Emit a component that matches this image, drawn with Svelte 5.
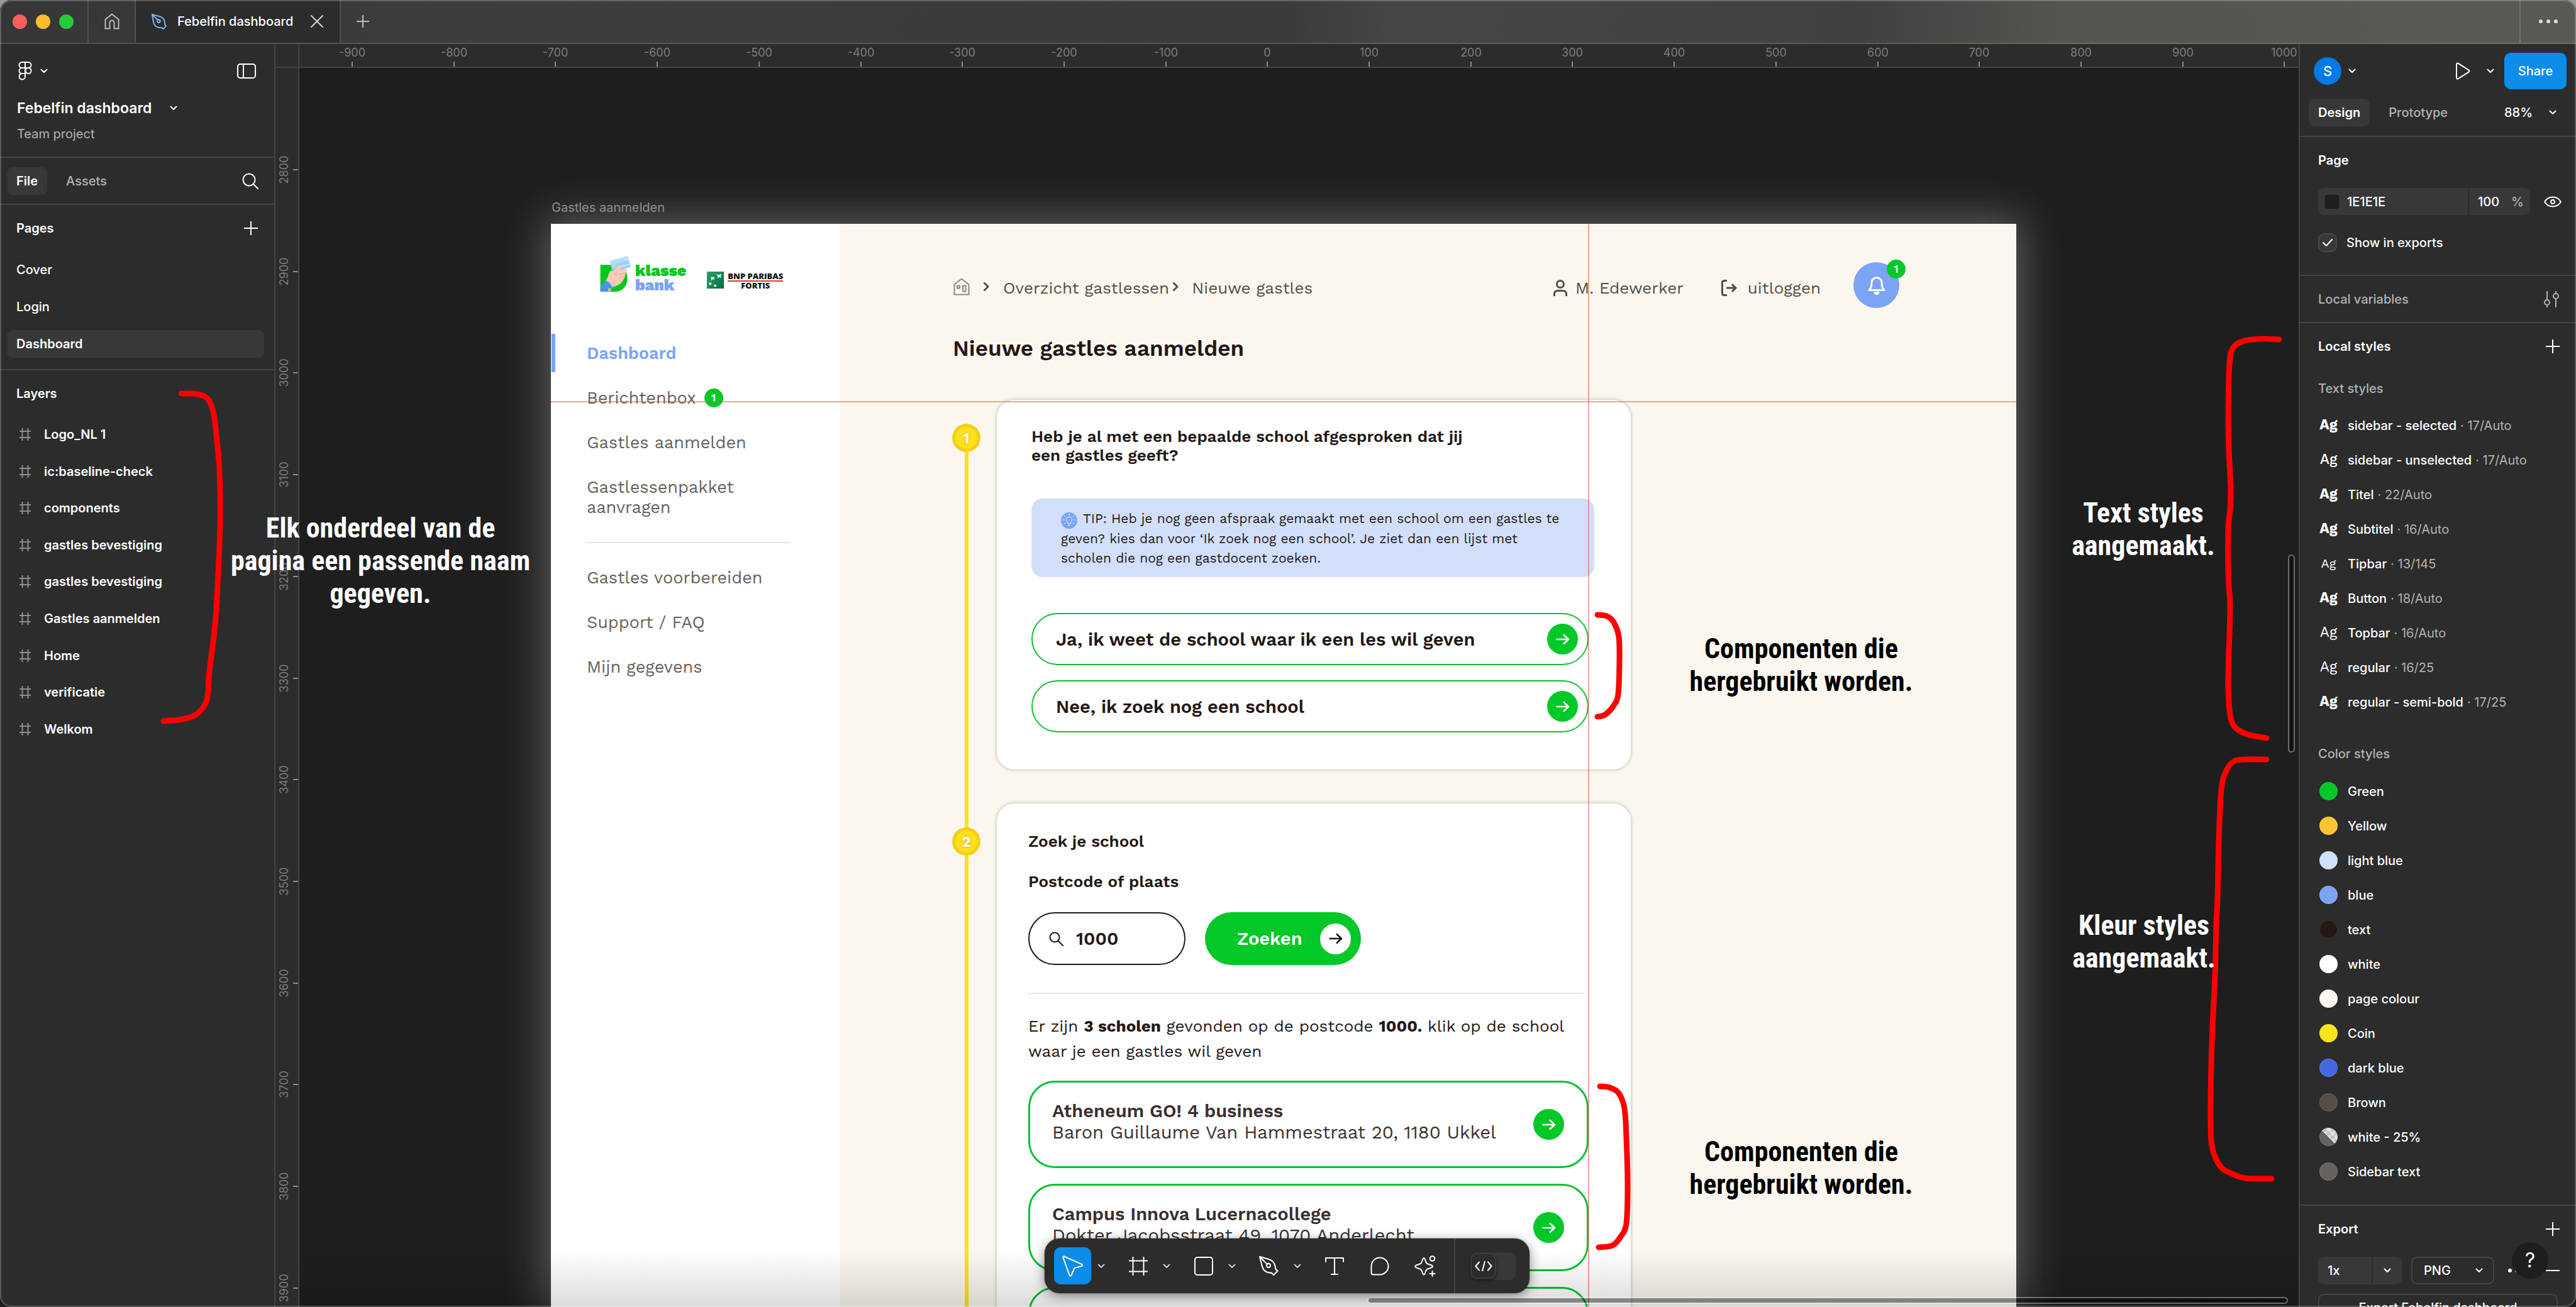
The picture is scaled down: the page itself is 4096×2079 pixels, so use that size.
<script>
  const pages = ['Cover', 'Login', 'Dashboard'];
  const layers = [
    'Logo_NL 1', 'ic:baseline-check', 'components', 'gastles bevestiging', 'gastles bevestiging',
    'Gastles aanmelden', 'Home', 'verificatie', 'Welkom'
  ];
  const textStyles = [
    { name: 'sidebar - selected', spec: '17/Auto', weight: 'bold' },
    { name: 'sidebar - unselected', spec: '17/Auto', weight: 'medium' },
    { name: 'Titel', spec: '22/Auto', weight: 'bold' },
    { name: 'Subtitel', spec: '16/Auto', weight: 'bold' },
    { name: 'Tipbar', spec: '13/145', weight: 'small' },
    { name: 'Button', spec: '18/Auto', weight: 'bold' },
    { name: 'Topbar', spec: '16/Auto', weight: 'regular' },
    { name: 'regular', spec: '16/25', weight: 'regular' },
    { name: 'regular - semi-bold', spec: '17/25', weight: 'bold' }
  ];
  const colorStyles = [
    ['Green', '#02c828'], ['Yellow', '#fbc531'], ['light blue', '#d1dffa'], ['blue', '#7ba4f5'],
    ['text', '#231815'], ['white', '#ffffff'], ['page colour', '#faf7ef'], ['Coin', '#ffe31b'],
    ['dark blue', '#4468e2'], ['Brown', '#544e48'], ['white - 25%', null], ['Sidebar text', '#67625d']
  ];
  const schools = [
    { name: 'Atheneum GO! 4 business', address: 'Baron Guillaume Van Hammestraat 20, 1180 Ukkel' },
    { name: 'Campus Innova Lucernacollege', address: 'Dokter Jacobsstraat 49, 1070 Anderlecht' },
    { name: '', address: '' }
  ];

  const PITCH = 161.7;
  const xTicks = Array.from({ length: 20 }, (_, i) => ({ label: (i - 9) * 100, at: Math.round(84 + i * PITCH) }));
  const yTicks = Array.from({ length: 12 }, (_, i) => ({ label: 2800 + i * 100, at: Math.round(162 + i * PITCH) }));

  const notes = [
    { x: 605, y: 814, tone: 'light', lines: ['Elk onderdeel van de', 'pagina een passende naam', 'gegeven.'] },
    { x: 3408, y: 790, tone: 'light', lines: ['Text styles', 'aangemaakt.'] },
    { x: 3409, y: 1446, tone: 'light', lines: ['Kleur styles', 'aangemaakt.'] },
    { x: 2864, y: 1006, tone: 'dark', lines: ['Componenten die', 'hergebruikt worden.'] },
    { x: 2864, y: 1806, tone: 'dark', lines: ['Componenten die', 'hergebruikt worden.'] }
  ];

  const strokes = [
    [[288, 626], [314, 627], [331, 635], [340, 659], [344, 692], [349, 749], [350, 831], [347, 912], [342, 994], [333, 1068], [329, 1113], [314, 1135], [291, 1144], [260, 1147]],
    [[3624, 540], [3596, 539], [3569, 542], [3551, 553], [3545, 580], [3543, 659], [3544, 713], [3547, 778], [3546, 811], [3543, 840], [3543, 912], [3546, 966], [3544, 1039], [3543, 1093], [3546, 1136], [3553, 1156], [3573, 1168], [3604, 1174]],
    [[3604, 1208], [3570, 1208], [3552, 1211], [3540, 1226], [3532, 1256], [3528, 1340], [3526, 1428], [3524, 1469], [3522, 1552], [3517, 1660], [3515, 1781], [3518, 1827], [3531, 1856], [3547, 1866], [3570, 1874], [3612, 1875]],
    [[2540, 978], [2555, 980], [2566, 990], [2574, 1013], [2575, 1052], [2573, 1104], [2566, 1122], [2552, 1137], [2540, 1140]],
    [[2544, 1728], [2560, 1730], [2574, 1739], [2583, 1763], [2586, 1809], [2588, 1885], [2586, 1946], [2577, 1967], [2564, 1981], [2542, 1984]]
  ];

  function smooth(p) {
    let d = `M${p[0]}`;
    for (let i = 0; i < p.length - 1; i++) {
      const a = p[i - 1] ?? p[i], b = p[i], c = p[i + 1], e = p[i + 2] ?? c;
      d += `C${b[0] + (c[0] - a[0]) / 6} ${b[1] + (c[1] - a[1]) / 6} ${c[0] - (e[0] - b[0]) / 6} ${c[1] - (e[1] - b[1]) / 6} ${c[0]} ${c[1]}`;
    }
    return d;
  }

  let postcode = $state('1000');
  let showInExports = $state(true);
</script>

{#snippet chevron()}
  <svg class="chev" width="12" height="8" viewBox="0 0 12 8" aria-hidden="true"><path d="M1.5 1.5 6 6l4.500-4.500" /></svg>
{/snippet}
{#snippet plus()}
  <svg width="22" height="22" viewBox="0 0 22 22" aria-hidden="true"><path d="M11 0v22M0 11h22" /></svg>
{/snippet}
{#snippet arrow()}
  <span class="arrow"><svg width="22" height="18" viewBox="0 0 24 20" aria-hidden="true"><path d="M1.500 10h20M14 2.500l8 7.500-8 7.500" /></svg></span>
{/snippet}
{#snippet crumb()}
  <svg class="crumb" width="9" height="14" viewBox="0 0 9 14" aria-hidden="true"><path d="M1.500 1.500 7 7l-5.500 5.500" /></svg>
{/snippet}

<div class="window">
  <header class="titlebar">
    <div class="lights"><i class="red"></i><i class="amber"></i><i class="green"></i></div>
    <button class="home" aria-label="Home">
      <svg width="24" height="26" viewBox="0 0 24 26"><path d="M1.500 10 12 1.500 22.500 10v14.500h-7V15a3.500 3.500 0 0 0-7 0v9.500h-7z" /></svg>
    </button>
    <div class="tab">
      <svg class="pen" width="26" height="26" viewBox="0 0 28 28"><path d="M2 2l13 3.500c5 1.500 8 5 8.500 10l.5 4.500 2 2-5 5-2-2-5-.5c-5-.5-8.500-4-9.500-9zM2 2l9.500 9.500" /><circle cx="13.500" cy="13.500" r="2.500" /></svg>
      <span>Febelfin dashboard</span>
      <button aria-label="Close tab"><svg width="20" height="20" viewBox="0 0 20 20"><path d="M1 1l18 18M19 1 1 19" /></svg></button>
    </div>
    <button class="newtab" aria-label="New tab"><svg width="20" height="20" viewBox="0 0 20 20"><path d="M10 0v20M0 10h20" /></svg></button>
    <button class="more" aria-label="More"><i></i><i></i><i></i></button>
  </header>

  <div class="work">
    <aside class="left">
      <section class="filehead">
        <div class="bar">
          <button class="logo" aria-label="Main menu">
            <svg width="22" height="30" viewBox="0 0 22 30"><path d="M6 1h5v9H6a4.500 4.500 0 0 1 0-9zM11 1h5a4.500 4.500 0 0 1 0 9h-5zM6 10h5v9H6a4.500 4.500 0 0 1 0-9zM6 19h5v5a4.700 4.700 0 1 1-5-5z" /><circle cx="16" cy="14.500" r="4.500" /></svg>
            {@render chevron()}
          </button>
          <button aria-label="Toggle panels"><svg width="30" height="24" viewBox="0 0 30 24"><rect x="1" y="1" width="28" height="22" rx="4" /><path d="M10 1v22" /></svg></button>
        </div>
        <button class="filename">Febelfin dashboard {@render chevron()}</button>
        <p class="project">Team project</p>
      </section>
      <section class="tabs">
        <button class="on">File</button>
        <button>Assets</button>
        <button class="find" aria-label="Search"><svg width="26" height="26" viewBox="0 0 26 26"><circle cx="11" cy="11" r="9.500" /><path d="M18 18l7 7" /></svg></button>
      </section>
      <section class="pages">
        <h2>Pages <button aria-label="Add page">{@render plus()}</button></h2>
        <ul>
          {#each pages as page}
            <li><button class:on={page === 'Dashboard'}>{page}</button></li>
          {/each}
        </ul>
      </section>
      <section class="layers">
        <h2>Layers</h2>
        <ul>
          {#each layers as layer}
            <li>
              <svg width="18" height="20" viewBox="0 0 18 20" aria-hidden="true"><path d="M4.500 0v20M13.500 0v20M0 5h18M0 15h18" /></svg>
              {layer}
            </li>
          {/each}
        </ul>
      </section>
    </aside>

    <main class="stage">
      <div class="corner"></div>
      <svg class="ruler top" aria-hidden="true">
        {#each xTicks as t}
          <text x={t.at} y="20">{t.label}</text><rect x={t.at - 1} y="28" width="2" height="8" />
        {/each}
      </svg>
      <svg class="ruler side" aria-hidden="true">
        {#each yTicks as t}
          <text transform="translate(20 {t.at}) rotate(-90)">{t.label}</text><rect x="28" y={t.at - 1} width="8" height="2" />
        {/each}
      </svg>

      <div class="canvas">
        <p class="frame-name">Gastles aanmelden</p>
        <article class="frame">
          <nav class="menu">
            <div class="logos">
              <div class="klasse">
                <svg width="50" height="58" viewBox="0 0 164 190" aria-hidden="true">
                  <path fill="#02c81c" d="M2 47h78c38 0 63 31 63 70s-25 70-68 70H2z" />
                  <g transform="rotate(-16 105 43)">
                    <rect x="56" y="13" width="98" height="61" rx="9" fill="#9ed1f8" />
                    <rect x="56" y="13" width="98" height="22" rx="9" fill="#b4defb" />
                    <rect x="64" y="38" width="15" height="13" rx="3" fill="#f3d36b" />
                    <path d="M100 56h46M134 28h12" stroke="#e9f6ff" stroke-width="4" />
                  </g>
                  <path fill="#f7cbb5" d="M32 128c9-14 10-28 18-44 6-9 16-6 22-3l28-31c7-6 18 0 13 10L99 74l32-5c11 0 13 12 4 17-3 20-9 39-24 54-13 13-27 17-43 21z" />
                  <path fill="none" stroke="#e9a98f" stroke-width="3" d="M92 80l-12 12c-3 5 2 9 8 7M132 88l-32 12M126 108l-24 6" />
                  <path fill="#9fd0f7" d="M24 130c8-5 18-3 28 6 10 10 16 20 15 31l-9 8z" />
                  <path fill="#4b93e6" d="M2 162l26-33c20 8 33 22 37 42l-12 16H2z" />
                  <circle cx="50" cy="177" r="8" fill="#f2d33c" />
                </svg>
                <p><b>klasse</b><b class="bank">bank</b></p>
              </div>
              <div class="bnp">
                <svg width="27" height="27" viewBox="0 0 87 87" aria-hidden="true">
                  <defs><linearGradient id="bnp" x1="0" y1="0" x2="1" y2="1"><stop offset="0" stop-color="#2fa36b" /><stop offset="1" stop-color="#00703f" /></linearGradient></defs>
                  <rect width="87" height="87" fill="url(#bnp)" />
                  <path fill="#fff" d="M50 14l12 3 13-5-5 11 5 10-10-5-12 7 3-11zM22 26l8 4 9-4-3 8 4 8-8-3-12 8 4-10-6-7 8 1zM12 54l5 3 5-3-1 6 5 5-7 1-3 7-2-7-6-2 5-4zM38 66l5 3 7-3-3 6 4 4-6 0-8 4 2-7-5-3z" />
                </svg>
                <p><b>BNP PARIBAS</b><b class="fortis">FORTIS</b></p>
              </div>
            </div>
            <ul>
              <li class="active"><a href="#dashboard">Dashboard</a></li>
              <li><a href="#berichten">Berichtenbox</a> <span class="count">1</span></li>
              <li><a href="#aanmelden">Gastles aanmelden</a></li>
              <li><a href="#pakket">Gastlessenpakket aanvragen</a></li>
              <li class="rule"></li>
              <li><a href="#voorbereiden">Gastles voorbereiden</a></li>
              <li><a href="#support">Support / FAQ</a></li>
              <li><a href="#gegevens">Mijn gegevens</a></li>
            </ul>
          </nav>

          <div class="content">
            <div class="topbar">
              <div class="crumbs">
                <svg class="house" width="26" height="28" viewBox="0 0 26 28" aria-hidden="true"><path d="M1.500 10.500 13 1.500l11.500 9v16h-23zM6 12.500h4v4H6zM15 12.500h4.500v9H15z" /></svg>
                {@render crumb()}
                <a href="#overzicht">Overzicht gastlessen</a>
                {@render crumb()}
                <a href="#nieuw">Nieuwe gastles</a>
              </div>
              <div class="account">
                <svg width="22" height="26" viewBox="0 0 22 26" aria-hidden="true"><circle cx="11" cy="7" r="5.500" /><path d="M1.500 26v-3.500c0-3 2-5 5-5h9c3 0 5 2 5 5V26" /></svg>
                <a href="#profiel">M. Edewerker</a>
                <svg class="out" width="25" height="26" viewBox="0 0 25 26" aria-hidden="true"><path d="M9 1.500H4.500c-2 0-3 1-3 3v17c0 2 1 3 3 3H9M8 13h15M17 7l6 6-6 6" /></svg>
                <a href="#uitloggen">uitloggen</a>
              </div>
              <button class="bell" aria-label="Meldingen">
                <svg width="28" height="31" viewBox="0 0 28 31"><path d="M2 23.500c3-3 4-7 4-12a8 8 0 0 1 16 0c0 5 1 9 4 12z" /><path d="M11 27.500a3.200 3.200 0 0 0 6 0z" fill="#fff" /></svg>
                <span class="count">1</span>
              </button>
            </div>
            <h1>Nieuwe gastles aanmelden</h1>

            <div class="steps">
              <div class="step">
                <span class="coin">1</span>
                <section class="card first">
                  <h3>Heb je al met een bepaalde school afgesproken dat jij<br />een gastles geeft?</h3>
                  <p class="tip"><svg width="26" height="26" viewBox="0 0 26 26" aria-hidden="true"><circle cx="13" cy="13" r="13" fill="#7ba4f5" stroke="none" /><path d="M11 17.500c0-2-2.500-3-2.500-6a4.500 4.500 0 0 1 9 0c0 3-2.500 4-2.500 6zM11.500 20.500h3M13 2.500v2M3 12h2M21 12h2M5.500 5.500 7 7M20.500 5.500 19 7M5.500 18.500 7 17M20.500 18.500 19 17" /></svg>TIP: Heb je nog geen afspraak gemaakt met een school om een gastles te<br />geven? kies dan voor ‘Ik zoek nog een school’. Je ziet dan een lijst met<br />scholen die nog een gastdocent zoeken.</p>
                  <button class="choice">Ja, ik weet de school waar ik een les wil geven {@render arrow()}</button>
                  <button class="choice">Nee, ik zoek nog een school {@render arrow()}</button>
                </section>
              </div>
              <div class="step">
                <span class="coin">2</span>
                <section class="card second">
                  <h3>Zoek je school</h3>
                  <label class="h" for="postcode">Postcode of plaats</label>
                  <div class="search">
                    <div class="field">
                      <svg width="23" height="23" viewBox="0 0 23 23" aria-hidden="true"><circle cx="9" cy="9" r="7.500" /><path d="M14.500 14.500l7.500 7.500" /></svg>
                      <input id="postcode" bind:value={postcode} />
                    </div>
                    <button class="go">Zoeken {@render arrow()}</button>
                  </div>
                  <hr />
                  <p class="found">Er zijn <b>3 scholen</b> gevonden op de postcode <b>1000.</b> klik op de school<br />waar je een gastles wil geven</p>
                  {#each schools as s}
                    <button class="school" aria-label={s.name || 'School'}><span><b>{s.name}</b>{s.address}</span>{@render arrow()}</button>
                  {/each}
                </section>
              </div>
            </div>
          </div>
          <i class="guide-h"></i>
          <i class="guide-v"></i>
        </article>

        <div class="fade"></div>
        <i class="scroll-h"></i>
        <i class="scroll-v"></i>

        <div class="toolbar">
          <button class="tool on" aria-label="Move"><svg width="34" height="36" viewBox="0 0 34 36"><path d="M3 2.500 31 15c1.500.8 1.300 2.500-.3 3L19.500 21l-5 11.500c-.8 1.600-2.600 1.400-3-.3L1.500 4.500C1 3 1.800 2 3 2.500z" /></svg></button>
          <button class="drop" aria-label="Move tools">{@render chevron()}</button>
          <button class="tool" aria-label="Frame"><svg width="30" height="30" viewBox="0 0 30 30"><path d="M6.500 0v30M23.500 0v30M0 6.500h30M0 23.500h30" /></svg></button>
          <button class="drop" aria-label="Region tools">{@render chevron()}</button>
          <button class="tool" aria-label="Rectangle"><svg width="30" height="30" viewBox="0 0 30 30"><rect x="1" y="1" width="28" height="28" rx="4" /></svg></button>
          <button class="drop" aria-label="Shape tools">{@render chevron()}</button>
          <button class="tool" aria-label="Pen"><svg width="31" height="31" viewBox="0 0 30 30"><path d="M1 1l13 3.500c6 1.500 10 6 11 12l.5 3.500 3 3-6 6-3-3-4-.5C9 25 6 21 4.500 15zM1 1l11.500 11.500" /><circle cx="14.500" cy="14.500" r="3" /></svg></button>
          <button class="drop" aria-label="Drawing tools">{@render chevron()}</button>
          <button class="tool" aria-label="Text"><svg width="30" height="28" viewBox="0 0 30 28"><path d="M1 7V1h28v6M15 1v26M10 27h10" /></svg></button>
          <button class="tool" aria-label="Comment"><svg width="30" height="30" viewBox="0 0 30 30"><path d="M4.500 28.500c-2 0-3-1-3-3V15A13.500 13.500 0 1 1 15 28.500z" /></svg></button>
          <button class="tool" aria-label="Actions"><svg width="34" height="34" viewBox="0 0 34 34"><path d="M15 4c1 0 1.500 1 2 2.500C18.500 12 19 13 24 14.500c3 1 5 1.500 5 3s-2 2-5 3C19 22 18.500 23 17 28c-.5 1.500-1 2.500-2 2.500s-1.500-1-2-2.500c-1.500-5-2-6-7-7.500-3-1-5-1.500-5-3s2-2 5-3c5-1.500 5.500-2.500 7-8C13.500 5 14 4 15 4z" /><circle cx="28.500" cy="5" r="3.800" /><path d="M28.500 25v8M24.500 29h8" /></svg></button>
          <span class="split"></span>
          <button class="dev" aria-label="Dev Mode"><span><svg width="28" height="16" viewBox="0 0 28 16"><path d="M7 1.500 1.500 8 7 14.500M21 1.500 26.500 8 21 14.500M16 0l-4 16" /></svg></span></button>
        </div>
      </div>
    </main>

    <aside class="right">
      <section class="rhead">
        <div class="share">
          <button class="me" aria-label="Account"><span>S</span>{@render chevron()}</button>
          <button class="play" aria-label="Present"><svg width="24" height="28" viewBox="0 0 24 28"><path d="M2 3.500c0-2 1.200-2.600 2.800-1.700l16.500 10.500c1.500 1 1.500 2.400 0 3.400L4.800 26.200C3.200 27 2 26.500 2 24.500z" /></svg></button>
          <button class="opts" aria-label="Present options">{@render chevron()}</button>
          <button class="primary">Share</button>
        </div>
        <div class="rtabs">
          <button class="on">Design</button>
          <button>Prototype</button>
          <button class="zoom">88% {@render chevron()}</button>
        </div>
      </section>

      <section class="page">
        <h2>Page</h2>
        <div class="fillrow">
          <div class="fill">
            <i></i>
            <input class="hex" aria-label="Page colour" value="1E1E1E" />
            <input class="pct" aria-label="Opacity" value="100" />
            <span>%</span>
          </div>
          <button aria-label="Hide"><svg width="28" height="20" viewBox="0 0 28 20"><path d="M1.200 10C4 5 8.500 2.500 14 2.500S24 5 26.800 10C24 15 19.500 17.500 14 17.500S4 15 1.200 10z" /><circle cx="14" cy="10" r="3" /></svg></button>
        </div>
        <label class="check">
          <input type="checkbox" bind:checked={showInExports} />
          <svg width="16" height="12" viewBox="0 0 16 12" aria-hidden="true"><path d="M1 6l5 5L15 1" /></svg>
          Show in exports
        </label>
      </section>

      <section class="vars">
        <h2>Local variables <button aria-label="Open variables"><svg width="26" height="26" viewBox="0 0 26 26"><path d="M6 0v14M6 22v4M20 0v4M20 12v14" /><circle cx="6" cy="18" r="4" /><circle cx="20" cy="8" r="4" /></svg></button></h2>
      </section>

      <section class="styles">
        <h2>Local styles <button aria-label="Add style">{@render plus()}</button></h2>
        <h4>Text styles</h4>
        <ul>
          {#each textStyles as s}
            <li><b class="ag {s.weight}">Ag</b>{s.name}<span>· {s.spec}</span></li>
          {/each}
        </ul>
        <h4 class="second-h">Color styles</h4>
        <ul>
          {#each colorStyles as [name, color]}
            <li><i class="swatch" class:mixed={!color} style:background-color={color}></i>{name}</li>
          {/each}
        </ul>
      </section>

      <section class="export">
        <h2>Export <button aria-label="Add export">{@render plus()}</button></h2>
        <div class="exprow">
          <div class="scale"><input aria-label="Scale" value="1x" /><button aria-label="Scale options">{@render chevron()}</button></div>
          <div class="format"><select aria-label="Format"><option>PNG</option></select>{@render chevron()}</div>
          <span class="dots"><i></i><i></i><i></i></span>
          <button class="minus" aria-label="Remove export"><svg width="22" height="2" viewBox="0 0 22 2"><path d="M0 1h22" /></svg></button>
        </div>
        <button class="expbtn">Export Febelfin dashboard</button>
        <button class="help" aria-label="Help">?</button>
      </section>
    </aside>
  </div>

  <svg class="marks" aria-hidden="true">
    {#each strokes as s}<path d={smooth(s)} />{/each}
  </svg>
  {#each notes as n}
    <p class="note {n.tone}" style:left="{n.x}px" style:top="{n.y}px">{#each n.lines as line}<span>{line}</span>{/each}</p>
  {/each}
</div>

<style>
  :global(body) { background: linear-gradient(#9b9a96, #1b1b18 20%); }
  * { box-sizing: border-box; margin: 0; padding: 0; }
  ul { list-style: none; }
  button, input, select { font: inherit; color: inherit; background: none; border: 0; outline: 0; text-align: left; }
  button { display: flex; align-items: center; }
  a { color: inherit; text-decoration: none; }
  svg { flex: none; fill: none; stroke: currentColor; stroke-width: 2; stroke-linecap: round; stroke-linejoin: round; }

  .window {
    position: relative; display: flex; flex-direction: column; height: 100vh; overflow: hidden;
    border-radius: 18px; font: 500 20px/24px Inter, sans-serif; color: #fff; background: #2c2c2c;
  }
  .window::after { content: ''; position: absolute; inset: 0; border-radius: 18px; border: 2px solid rgba(255, 255, 255, .22); pointer-events: none; }

  .titlebar {
    display: flex; flex: none; height: 70px; border-bottom: 2px solid rgba(255, 255, 255, .13); color: #bdbdbb;
    background: linear-gradient(90deg, #363636, #3c3d3c 17%, #3b3b3a 50%, #474645 54%, #434241 70%, #41403f 72%, #555450 80%, #5a5955);
  }
  .lights { display: flex; align-items: center; gap: 14px; width: 141px; padding-left: 20px; border-right: 2px solid rgba(255, 255, 255, .13); }
  .lights i { width: 23px; height: 23px; border-radius: 50%; }
  .red { background: #ff5f57; } .amber { background: #febc2e; } .green { background: #28c840; }
  .home { width: 75px; justify-content: center; border-right: 2px solid rgba(255, 255, 255, .13); }
  .tab { display: flex; align-items: center; width: 326px; padding-left: 24px; background: #2c2c2c; border-right: 2px solid rgba(255, 255, 255, .16); color: #fff; }
  .tab .pen { color: #7cc0f5; margin-right: 16px; }
  .tab button { margin-left: auto; margin-right: 26px; color: #d0d0d0; }
  .newtab { padding-left: 25px; }
  .more { margin-left: auto; width: 90px; justify-content: center; gap: 6px; border-left: 2px solid rgba(255, 255, 255, .16); }
  .more i { width: 6px; height: 6px; border-radius: 50%; background: #dcdcda; }

  .work { display: flex; flex: 1; min-height: 0; }
  .left { flex: none; width: 438px; border-right: 2px solid #444; }
  .left section, .right section { border-bottom: 2px solid #444; }
  .left .layers, .right .export { border-bottom: 0; }
  h2 { display: flex; align-items: center; justify-content: space-between; height: 73px; font-size: 20px; font-weight: 600; }
  .left h2 { padding: 0 26px; }

  .filehead { padding: 14px 29px 25px 27px; }
  .bar { display: flex; align-items: center; justify-content: space-between; height: 58px; padding-left: 2px; }
  .bar .logo { gap: 13px; }
  .filename { height: 60px; gap: 29px; font-size: 23px; font-weight: 600; }
  .project { height: 22px; line-height: 22px; font-weight: 400; color: #b3b3b3; }
  .tabs { display: flex; align-items: center; height: 75px; padding: 0 25px 0 11px; gap: 15px; }
  .tabs button, .rtabs button { height: 44px; padding: 0 15px; border-radius: 9px; color: #b3b3b3; }
  .tabs .on, .rtabs .on { background: #383838; color: #fff; font-weight: 600; }
  .tabs .find { margin-left: auto; padding: 0; color: #fff; }
  .pages { padding-bottom: 11px; }
  .pages li { display: flex; align-items: center; height: 59px; padding: 0 16px 0 11px; }
  .pages li button { width: 100%; height: 44px; padding-left: 15px; border-radius: 9px; }
  .pages li .on { background: #383838; font-weight: 600; }
  .layers ul { display: grid; grid-auto-rows: 1fr; height: 527px; }
  .layers li { display: flex; align-items: center; gap: 21px; padding-left: 31px; font-weight: 600; }
  .layers li svg { color: #8c8c8c; }

  .stage { display: grid; grid-template: 38px minmax(0, 1fr) / 38px minmax(0, 1fr); flex: 1; min-width: 0; }
  .corner { border-right: 2px solid #444; border-bottom: 2px solid #444; }
  .ruler { width: 100%; height: 100%; overflow: hidden; stroke: none; font: 400 18px Inter, sans-serif; }
  .ruler.top { border-bottom: 2px solid #444; }
  .ruler.side { border-right: 2px solid #444; }
  .ruler text { fill: #7d7d7d; text-anchor: middle; }
  .ruler rect { fill: #8c8c8c; }

  .canvas { position: relative; overflow: hidden; background: #1e1e1e; }
  .frame-name { position: absolute; z-index: 1; left: 401px; top: 210px; font-weight: 400; color: #8f8f8f; }
  .frame {
    position: absolute; left: 400px; top: 248px; bottom: 0; width: 2330px; display: flex;
    background: #fbf7ef; box-shadow: 0 0 62px 10px rgba(255, 255, 255, .28); color: #231815;
    font: 400 26px/32px 'Work Sans', 'Open Sans', sans-serif;
  }
  .menu { flex: none; width: 460px; background: #fff; }
  .logos { display: flex; padding: 51px 0 0 78px; height: 174px; }
  .klasse { display: flex; }
  .klasse p { display: flex; flex-direction: column; margin: 12px 0 0 6px; font: 800 25px/23px 'Work Sans', sans-serif; color: #02c81c; }
  .klasse .bank { color: #7ba4f5; }
  .klasse svg, .bnp svg { stroke: none; }
  .bnp { display: flex; gap: 6px; margin: 25px 0 0 33px; }
  .bnp p { display: flex; flex-direction: column; align-items: center; font: 700 13px/14px 'Open Sans', sans-serif; color: #111; }
  .bnp p b:first-child { border-bottom: 2px solid #d8352a; }
  .bnp .fortis { line-height: 12px; }
  .menu ul { display: flex; flex-direction: column; gap: 39px; padding: 16px 0 0; }
  .menu li { position: relative; display: flex; align-items: center; width: 340px; padding-left: 57px; font-size: 27px; color: #67625d; }
  .menu .active { color: #7ba4f5; font-weight: 600; }
  .menu .active::before { content: ''; position: absolute; left: 1px; top: -15px; width: 6px; height: 61px; background: #7ba4f5; }
  .menu .rule { width: 325px; height: 2px; padding: 0; margin-left: 57px; background: #e3e3e3; }
  .count { display: grid; place-items: center; width: 30px; height: 30px; border-radius: 50%; background: #02c828; color: #fff; font: 600 18px/18px 'Work Sans', sans-serif; }
  .menu .count { margin-left: 13px; }

  .content { flex: 1; padding: 61px 186px 0 179px; }
  .topbar { display: flex; align-items: center; height: 73px; color: #544e48; }
  .crumbs, .account { display: flex; align-items: center; padding-top: 8px; white-space: nowrap; }
  .house { color: #8b8680; margin: 0 22px 4px 1px; }
  .crumb, .crumbs :global(.crumb) { stroke-width: 3; margin-right: 22px; margin-bottom: 4px; }
  .crumbs a + .crumb, .crumbs a + :global(.crumb) { margin: 0 21px 4px 6px; }
  .account { margin-left: auto; margin-right: 52px; }
  .account svg { margin-right: 13px; stroke-width: 3; stroke-linecap: butt; }
  .account .out { margin: 0 17px 0 60px; }
  .bell { position: relative; width: 73px; height: 73px; justify-content: center; border-radius: 50%; background: #7ba4f5; color: #fff; }
  .bell svg { stroke-width: 3; }
  .bell .count { position: absolute; right: -10px; top: -4px; }
  h1 { margin: 43px 0 61px; font-size: 35px; line-height: 42px; font-weight: 600; }

  .steps { position: relative; display: flex; flex-direction: column; gap: 54px; margin-left: -1px; }
  .steps::before { content: ''; position: absolute; left: 20px; top: 60px; bottom: 0; width: 6px; background: #fee21b; }
  .step { position: relative; display: flex; gap: 26px; }
  .coin {
    flex: none; display: grid; place-items: center; width: 45px; height: 45px; margin-top: 38px; border-radius: 50%;
    background: radial-gradient(circle closest-side, #ffe01b 74%, #f4cf1a 78%); color: #fff; font: 700 24px/24px 'Work Sans', sans-serif;
    text-shadow: 0 0 3px #dfa81c, 0 0 2px #dfa81c;
  }
  .card { width: 1008px; border-radius: 28px; background: #fff; box-shadow: 0 0 5px 1px rgba(80, 95, 80, .32); }
  .first { padding: 43px 55px 59px; }
  h3, .h { display: block; font-size: 26px; line-height: 30px; font-weight: 600; }
  .tip { width: 895px; margin: 54px 0 57px; padding: 16px 0 15px 47px; border-radius: 18px; background: #d2dffa; font-size: 21px; line-height: 31px; }
  .tip svg { vertical-align: -9px; margin-right: 9px; color: #fff; stroke-width: 1; }
  .choice { justify-content: space-between; width: 886px; height: 83px; padding: 0 15px 0 37px; border: 2px solid #0fbf33; border-radius: 42px; font-size: 29px; font-weight: 600; }
  .choice + .choice { margin-top: 24px; }
  .arrow { flex: none; display: grid; place-items: center; width: 49px; height: 49px; border-radius: 50%; background: #02c828; color: #fff; }
  .arrow svg { stroke-width: 3; }
  .second { padding: 45px 50px 60px; }
  .h { margin-top: 34px; }
  .search { display: flex; gap: 31px; margin-top: 34px; font-size: 29px; font-weight: 600; }
  .field { display: flex; align-items: center; gap: 20px; width: 250px; height: 84px; padding-left: 31px; border: 2px solid #231815; border-radius: 42px; }
  .field input { width: 140px; }
  .go { justify-content: space-between; width: 248px; height: 84px; padding: 0 16px 0 51px; border-radius: 42px; background: #02c828; color: #fff; }
  .go .arrow, .go :global(.arrow) { background: #fff; color: #231815; }
  hr { width: 884px; height: 2px; margin: 44px 0 31px; border: 0; background: #e6e6e6; }
  .found { line-height: 40px; margin-bottom: 27px; }
  .found b { font-weight: 700; }
  .school { justify-content: space-between; width: 891px; height: 139px; margin-bottom: 25px; padding: 0 36px 0 35px; border: 3px solid #0cc133; border-radius: 42px; font-size: 29px; line-height: 34px; color: #3a302e; }
  .school > span:first-child { align-self: flex-start; margin-top: 28px; }
  .school b { display: block; font-weight: 600; }
  .guide-h, .guide-v { position: absolute; background: rgba(216, 96, 76, .55); }
  .guide-h { left: 0; right: 0; top: 282px; height: 2px; }
  .guide-v { left: 1649px; top: 0; bottom: 0; width: 2px; }

  .fade { position: absolute; left: 0; right: 0; bottom: 0; height: 90px; background: linear-gradient(rgba(0, 0, 0, 0), rgba(0, 0, 0, .14)); }
  .scroll-h, .scroll-v { position: absolute; border: 2px solid rgba(255, 255, 255, .35); border-radius: 6px; background: rgba(0, 0, 0, .4); background-clip: padding-box; }
  .scroll-h { left: 1698px; right: 17px; bottom: 5px; height: 11px; }
  .scroll-v { right: 6px; top: 774px; width: 11px; height: 315px; }

  .toolbar {
    position: absolute; left: 1185px; bottom: 22px; display: flex; align-items: center; height: 87px; padding: 0 22px 0 15px;
    border-radius: 24px; background: #2c2c2c; box-shadow: 0 4px 18px rgba(0, 0, 0, .45), 0 0 2px rgba(0, 0, 0, .6);
  }
  .tool { width: 59px; height: 59px; justify-content: center; border-radius: 10px; margin-right: 13px; }
  .tool.on { background: #0d8ce8; }
  .tool:has(+ .drop) { margin-right: 0; }
  .drop { width: 32px; margin-right: 13px; justify-content: center; color: #ccc; }
  .split { width: 2px; height: 100%; margin: 0 24px 0 4px; background: #444; }
  .dev { width: 72px; height: 44px; border-radius: 10px; background: #383838; }
  .dev span { display: grid; place-items: center; width: 41px; height: 41px; border-radius: 10px; border: 2px solid #3c3c3c; background: #2c2c2c; box-shadow: 0 2px 5px rgba(0, 0, 0, .5); }

  .right { flex: none; width: 441px; border-left: 2px solid #444; }
  .right section { padding: 0 26px 0 29px; }
  .right .rhead { height: 148px; padding: 14px 15px 0 14px; }
  .share { display: flex; align-items: center; height: 58px; }
  .me { gap: 11px; margin-left: 8px; }
  .me span { display: grid; place-items: center; width: 44px; height: 44px; border-radius: 50%; background: #007be5; font-size: 22px; }
  .play { margin-left: auto; }
  .opts { margin: 0 16px 0 26px; }
  .primary { height: 58px; width: 99px; justify-content: center; border-radius: 10px; background: #0d8de9; }
  .rtabs { display: flex; align-items: center; margin-top: 15px; gap: 15px; }
  .rtabs .zoom { margin-left: auto; padding: 0 16px 0 0; gap: 26px; color: #fff; }
  .page { height: 221px; }
  .fillrow { display: flex; align-items: center; justify-content: space-between; margin: 8px -3px 0 0; }
  .fill { display: flex; align-items: center; width: 337px; height: 43px; border-radius: 9px; background: #383838; color: #b3b3b3; }
  .fill i { width: 24px; height: 24px; margin-left: 10px; border-radius: 5px; background: #1e1e1e; border: 1px solid #333; }
  .fill input { color: #fff; }
  .hex { width: 192px; margin-left: 12px; height: 100%; }
  .pct { width: 69px; height: 100%; padding-left: 14px; border-left: 2px solid #2c2c2c; }
  .check { position: relative; display: flex; align-items: center; gap: 15px; height: 30px; margin-top: 29px; }
  .check input { appearance: none; width: 30px; height: 30px; border: 2px solid #484848; border-radius: 9px; background: #383838; }
  .check svg { position: absolute; left: 7px; visibility: hidden; }
  .check input:checked + svg { visibility: visible; }
  .vars h2, h4 { color: #b3b3b3; font-weight: 500; }
  h4 { height: 62px; line-height: 62px; font-size: 20px; }
  .second-h { margin-top: 23px; height: 64px; line-height: 64px; }
  .styles { height: 1404px; }
  .styles li { display: flex; align-items: center; height: 55px; }
  .styles li span { margin-left: 6px; color: #b3b3b3; font-weight: 400; }
  .ag { width: 29px; margin: 0 16px 2px 2px; text-align: center; font: 400 23px/28px 'Work Sans', sans-serif; }
  .ag.bold { font-weight: 700; } .ag.medium { font-weight: 500; } .ag.small { font-size: 20px; }
  .swatch { width: 29px; height: 29px; margin: 0 16px 0 2px; border-radius: 50%; box-shadow: inset 0 0 0 1px rgba(255, 255, 255, .1); }
  .mixed { background: linear-gradient(45deg, #636363 50%, transparent 50%), repeating-conic-gradient(#c4c4c4 0 25%, #e2e2e2 0 50%) 0 0 / 12px 12px; }
  .right .export { position: relative; }
  .exprow { display: flex; align-items: center; margin: 8px -3px 15px 0; }
  .scale { display: flex; width: 133px; height: 44px; border-radius: 9px; background: #383838; }
  .scale input { width: 87px; padding-left: 15px; border-right: 2px solid #2c2c2c; }
  .scale button { flex: 1; justify-content: center; }
  .format { position: relative; width: 132px; height: 44px; margin-left: 15px; border: 2px solid #444; border-radius: 9px; }
  .format select { appearance: none; width: 100%; height: 100%; padding-left: 18px; }
  .format .chev, .format :global(.chev) { position: absolute; right: 16px; top: 16px; pointer-events: none; }
  .dots { display: flex; gap: 5px; margin-left: 22px; }
  .dots i { width: 6px; height: 6px; border-radius: 50%; background: #fff; }
  .minus { margin-left: auto; margin-right: 3px; }
  .expbtn { width: 381px; height: 44px; justify-content: center; border: 2px solid #444; border-radius: 9px; }
  .help { position: absolute; right: 44px; top: 58px; width: 58px; height: 58px; justify-content: center; border-radius: 50%; background: #1e1e1e; font: 400 32px/32px Inter, sans-serif; }

  .marks { position: absolute; inset: 0; width: 100%; height: 100%; stroke: #f00; stroke-width: 9; pointer-events: none; }
  .note { position: absolute; display: flex; flex-direction: column; align-items: center; width: 600px; margin-left: -300px; font: 700 44px/52px 'Roboto Condensed', 'Liberation Sans', sans-serif; white-space: nowrap; pointer-events: none; }
  .light { color: #fff; } .dark { color: #000; }
</style>
